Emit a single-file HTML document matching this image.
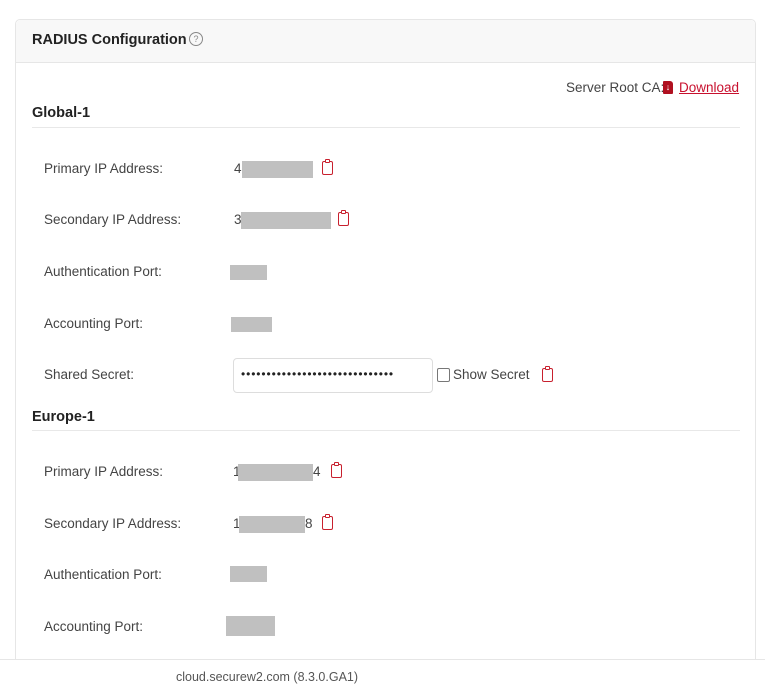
<!DOCTYPE html>
<html><head><style>
html,body{margin:0;width:765px;height:696px;overflow:hidden}
body{background:#fff;font-family:"Liberation Sans",sans-serif;color:#444;position:relative}
.card{position:absolute;left:15px;top:19px;width:741px;height:660px;border:1px solid #e6e6e6;border-radius:5px;background:#fff;box-sizing:border-box}
.hdr{height:43px;background:#f8f8f8;border-bottom:1px solid #e6e6e6;border-radius:5px 5px 0 0;box-sizing:border-box}
.t{position:absolute;white-space:nowrap}
.h{font-weight:bold;color:#222;font-size:14.5px}
.lbl{font-size:13.5px;color:#444;left:44px}
.g{position:absolute;background:#c0c0c0;height:17px}
.line{position:absolute;left:32px;width:708px;height:1px;background:#e8e8e8}
.clip{position:absolute;width:9px;height:12px;border:1.5px solid #c8202e;border-radius:2px}
.clip:before{content:"";position:absolute;left:2px;top:-3px;width:3px;height:2px;border:1.5px solid #c8202e;border-radius:1px;background:#fff}
.footer{position:absolute;left:0;top:659px;width:765px;height:37px;background:#fff;border-top:1px solid #e6e6e6}
</style></head><body>
<div class="card"><div class="hdr"></div></div>
<div class="t h" style="left:32px;top:32px">RADIUS Configuration</div>
<div class="t" style="left:189px;top:32px;width:12px;height:12px;border:1px solid #888;border-radius:50%;font-size:9px;text-align:center;line-height:12px;color:#888">?</div>
<div class="t" style="left:566px;top:80px;font-size:13.5px">Server Root CA:</div>
<div class="t" style="left:663px;top:81px;width:10px;height:13px;background:#b01020;border-radius:1px 3px 1px 1px;color:#fff;font-size:9px;text-align:center;line-height:13px">↓</div>
<div class="t" style="left:679px;top:80px;font-size:13.5px;color:#c8102e;text-decoration:underline">Download</div>

<div class="t h" style="left:32px;top:105px">Global-1</div>
<div class="line" style="top:127px"></div>
<div class="t lbl" style="top:161px">Primary IP Address:</div>
<div class="t" style="left:234px;top:161px;font-size:13.5px">4</div><div class="g" style="left:242px;top:161px;width:71px"></div>
<div class="clip" style="left:322px;top:161px"></div>
<div class="t lbl" style="top:212px">Secondary IP Address:</div>
<div class="t" style="left:234px;top:212px;font-size:13.5px">3</div><div class="g" style="left:241px;top:212px;width:90px"></div>
<div class="clip" style="left:338px;top:212px"></div>
<div class="t lbl" style="top:264px">Authentication Port:</div>
<div class="g" style="left:230px;top:265px;width:37px;height:15px"></div>
<div class="t lbl" style="top:316px">Accounting Port:</div>
<div class="g" style="left:231px;top:317px;width:41px;height:15px"></div>
<div class="t lbl" style="top:367px">Shared Secret:</div>
<div class="t" style="left:233px;top:358px;width:198px;height:33px;border:1px solid #ddd;border-radius:4px"></div>
<div class="t" style="left:241px;top:367px;font-size:12px;color:#222;letter-spacing:0.9px">••••••••••••••••••••••••••••••</div>
<div class="t" style="left:437px;top:368px;width:11px;height:12px;border:1px solid #777;border-radius:2px"></div>
<div class="t" style="left:453px;top:367px;font-size:13.5px">Show Secret</div>
<div class="clip" style="left:542px;top:368px"></div>

<div class="t h" style="left:32px;top:409px">Europe-1</div>
<div class="line" style="top:430px"></div>
<div class="t lbl" style="top:464px">Primary IP Address:</div>
<div class="t" style="left:233px;top:464px;font-size:13.5px">1</div><div class="g" style="left:238px;top:464px;width:75px"></div>
<div class="t" style="left:313px;top:464px;font-size:13.5px">4</div>
<div class="clip" style="left:331px;top:464px"></div>
<div class="t lbl" style="top:516px">Secondary IP Address:</div>
<div class="t" style="left:233px;top:516px;font-size:13.5px">1</div><div class="g" style="left:239px;top:516px;width:66px"></div>
<div class="t" style="left:305px;top:516px;font-size:13.5px">8</div>
<div class="clip" style="left:322px;top:516px"></div>
<div class="t lbl" style="top:567px">Authentication Port:</div>
<div class="g" style="left:230px;top:566px;width:37px;height:16px"></div>
<div class="t lbl" style="top:619px">Accounting Port:</div>
<div class="g" style="left:226px;top:616px;width:49px;height:20px"></div>

<div class="footer"><div class="t" style="left:176px;top:10px;font-size:12.5px;color:#555">cloud.securew2.com (8.3.0.GA1)</div></div>
</body></html>
